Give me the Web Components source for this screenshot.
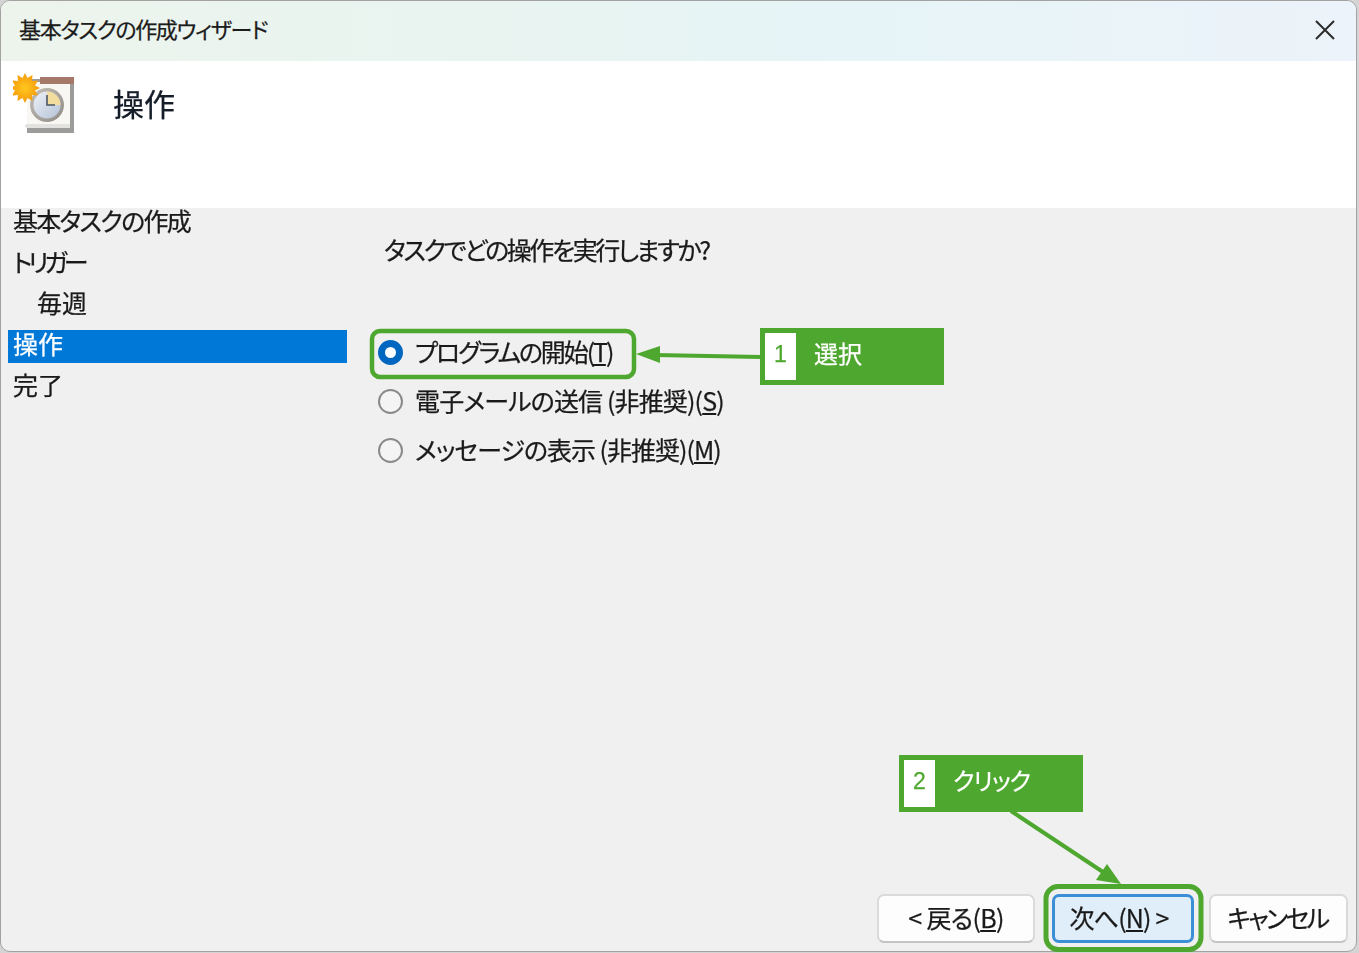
<!DOCTYPE html>
<html lang="ja">
<head>
<meta charset="utf-8">
<title>基本タスクの作成ウィザード</title>
<style>
    html, body { margin: 0; padding: 0; background: #d4d4d4; }
    body {
        width: 1359px;
        height: 953px;
        overflow: hidden;
        font-family: "Noto Sans CJK JP", "Noto Sans", sans-serif;
        color: #111;
        -webkit-text-stroke: .25px;
    }
</style>
</head>
<body>
<wizard-window>
    <title-bar slot="title">基本タスクの作成ウィザード</title-bar>
    <wizard-header slot="header">操作</wizard-header>
    <step-list slot="steps">
        <step-item style="letter-spacing:-1.75px">基本タスクの作成</step-item>
        <step-item style="letter-spacing:-4.2px">トリガー</step-item>
        <step-item indent>毎週</step-item>
        <step-item selected>操作</step-item>
        <step-item>完了</step-item>
    </step-list>
    <action-pane slot="content">
        <span slot="question">タスクでどの操作を実行しますか?</span>
        <radio-option checked style="letter-spacing:-2.1px">プログラムの開始(<u>T</u>)</radio-option>
        <radio-option style="letter-spacing:-.85px">電子メールの送信 (非推奨)(<u>S</u>)</radio-option>
        <radio-option style="letter-spacing:-1px">メッセージの表示 (非推奨)(<u>M</u>)</radio-option>
    </action-pane>
    <wizard-button slot="buttons" style="width:158px;letter-spacing:-.7px">&lt; 戻る(<u>B</u>)</wizard-button>
    <wizard-button slot="buttons" primary style="width:142px;margin-left:17px;padding-right:8px;letter-spacing:-.8px">次へ(<u>N</u>) &gt;</wizard-button>
    <wizard-button slot="buttons" style="width:139px;margin-left:15px;padding-right:2px;letter-spacing:-2.6px">キャンセル</wizard-button>
</wizard-window>

<guide-overlay></guide-overlay>
<guide-tag num="1" style="left:760px;top:328px">選択</guide-tag>
<guide-tag num="2" style="left:899px;top:755px"><span style="letter-spacing:-1.2px">クリック</span></guide-tag>

<script>
class WizardWindow extends HTMLElement {
    constructor() {
        super();
        this.attachShadow({ mode: 'open' });
        this.shadowRoot.innerHTML = `
            <style>
                :host {
                    display: flex;
                    flex-direction: column;
                    box-sizing: border-box;
                    width: 1357px;
                    height: 952px;
                    background: #f0f0f0;
                    border: 1px solid #a2a2a2;
                    border-radius: 10px;
                    overflow: hidden;
                    filter: blur(.45px);
                }
                .main { flex: 1; display: flex; min-height: 0; }
                .footer { display: flex; justify-content: flex-end; padding: 0 8px 8px 0; }
            </style>
            <slot name="title"></slot>
            <slot name="header"></slot>
            <div class="main">
                <slot name="steps"></slot>
                <slot name="content"></slot>
            </div>
            <div class="footer"><slot name="buttons"></slot></div>
        `;
    }
}

class TitleBar extends HTMLElement {
    constructor() {
        super();
        this.attachShadow({ mode: 'open' });
        this.shadowRoot.innerHTML = `
            <style>
                :host {
                    display: flex;
                    align-items: center;
                    height: 60px;
                    flex: none;
                    box-sizing: border-box;
                    padding: 0 21px 2px 18px;
                    background: linear-gradient(90deg, #ecf4ec 0%, #e8f4f2 45%, #e6f4f7 60%, #ecf3fa 100%);
                    font-size: 22px;
                    font-feature-settings: "palt";
                    letter-spacing: -1.3px;
                    color: #1c1c1c;
                }
                .text { flex: 1; padding-bottom: 4px; }
                svg { display: block; }
            </style>
            <span class="text"><slot></slot></span>
            <svg width="20" height="20" viewBox="0 0 20 20" fill="none" stroke="#2b2b2b" stroke-width="2">
                <path d="M1 1 19 19M19 1 1 19"/>
            </svg>
        `;
    }
}

class WizardHeader extends HTMLElement {
    constructor() {
        super();
        this.attachShadow({ mode: 'open' });
        this.shadowRoot.innerHTML = `
            <style>
                :host {
                    display: flex;
                    flex: none;
                    height: 147px;
                    background: #fff;
                    padding: 12px 0 0 12px;
                    box-sizing: border-box;
                    gap: 38px;
                }
                svg { flex: none; display: block; }
                .caption { font-size: 31px; line-height: 44px; margin-top: 8px; margin-left: -1px; color: #141c28; }
            </style>
            <svg width="63" height="62" viewBox="0 0 63 62">
                <defs>
                    <radialGradient id="sun" cx="50%" cy="50%" r="50%">
                        <stop offset="0" stop-color="#ffc81e"/>
                        <stop offset="1" stop-color="#f59a0c"/>
                    </radialGradient>
                    <linearGradient id="face" x1="0" y1="0" x2="1" y2="1">
                        <stop offset="0" stop-color="#eef2f8"/>
                        <stop offset="1" stop-color="#b4c2d6"/>
                    </linearGradient>
                    <linearGradient id="rim" x1="0" y1="0" x2="1" y2="1">
                        <stop offset="0" stop-color="#c4c0b8"/>
                        <stop offset="1" stop-color="#8f8b85"/>
                    </linearGradient>
                </defs>
                <path d="M14 6h47v54H14z" fill="#9c9c9a"/>
                <path d="M14 9h43v46H14z" fill="#f8f7f4"/>
                <path d="M12 52l2-1h43v4H14l-2-1z" fill="#e2e2e0"/>
                <path d="M27 4h34v7H27z" fill="#a5786a"/>
                <circle cx="34" cy="32" r="17" fill="url(#rim)"/>
                <circle cx="34" cy="32" r="13.500" fill="url(#face)"/>
                <path d="M34 18.500a13.500 13.500 0 0 1 13.500 13.500H34z" fill="#f3dd9e"/>
                <path d="M34 22v10h8" fill="none" stroke="#4a5565" stroke-width="1.6"/>
                <path d="M12 0l2.500 5 5-3-.5 6 6-.5-3 5 5 2.500-5 2.500 3 5-6-.5.5 6-5-3-2.500 5-2.500-5-5 3 .5-6-6 .5 3-5-5-2.500 5-2.500-3-5 6 .5-.5-6 5 3z" fill="url(#sun)"/>
            </svg>
            <div class="caption"><slot></slot></div>
        `;
    }
}

class StepList extends HTMLElement {
    constructor() {
        super();
        this.attachShadow({ mode: 'open' });
        this.shadowRoot.innerHTML = `
            <style>
                :host {
                    display: flex;
                    flex-direction: column;
                    flex: none;
                    gap: 8px;
                    width: 339px;
                    margin: -1px 0 0 7px;
                }
            </style>
            <slot></slot>
        `;
    }
}

class StepItem extends HTMLElement {
    constructor() {
        super();
        this.attachShadow({ mode: 'open' });
        this.shadowRoot.innerHTML = `
            <style>
                :host {
                    display: block;
                    height: 33px;
                    line-height: 27px;
                    padding-left: 5px;
                    font-size: 25px;
                    font-feature-settings: "palt";
                    color: #1a1a1a;
                    white-space: nowrap;
                }
                :host([indent]) { padding-left: 29px; }
                :host([selected]) { background: #0078d7; color: #fff; }
            </style>
            <slot></slot>
        `;
    }
}

class ActionPane extends HTMLElement {
    constructor() {
        super();
        this.attachShadow({ mode: 'open' });
        this.shadowRoot.innerHTML = `
            <style>
                :host {
                    display: flex;
                    flex-direction: column;
                    flex: 1;
                    padding: 23px 0 0 31px;
                    font-size: 25px;
                    font-feature-settings: "palt";
                    letter-spacing: -2.4px;
                    color: #1a1a1a;
                }
                .question { line-height: 36px; margin: 0 0 61px 6px; }
            </style>
            <div class="question"><slot name="question"></slot></div>
            <slot></slot>
        `;
    }
}

class RadioOption extends HTMLElement {
    constructor() {
        super();
        this.attachShadow({ mode: 'open' });
        this.shadowRoot.innerHTML = `
            <style>
                :host {
                    display: flex;
                    align-items: center;
                    gap: 12px;
                    height: 49px;
                    white-space: nowrap;
                }
                .dot {
                    box-sizing: border-box;
                    flex: none;
                    width: 25px;
                    height: 25px;
                    border-radius: 50%;
                    border: 2px solid #8a8a8a;
                    background: #f4f4f4;
                }
                :host([checked]) .dot {
                    border: 7px solid #0067c0;
                    background: #fff;
                }
                .text { padding-bottom: 4px; }
            </style>
            <span class="dot"></span>
            <span class="text"><slot></slot></span>
        `;
    }
}

class WizardButton extends HTMLElement {
    constructor() {
        super();
        this.attachShadow({ mode: 'open' });
        this.shadowRoot.innerHTML = `
            <style>
                :host {
                    display: inline-flex;
                    box-sizing: border-box;
                    align-items: center;
                    justify-content: center;
                    height: 49px;
                    padding-bottom: 3px;
                    border: 2px solid #dadada;
                    border-bottom-color: #c4c4c4;
                    border-radius: 7px;
                    background: #fdfdfd;
                    font-size: 25px;
                    font-feature-settings: "palt";
                    color: #1a1a1a;
                    white-space: nowrap;
                }
                :host([primary]) {
                    background: #e0eef9;
                    border: 3px solid #3b8fd6;
                }
            </style>
            <slot></slot>
        `;
    }
}

class GuideTag extends HTMLElement {
    constructor() {
        super();
        this.attachShadow({ mode: 'open' });
        this.shadowRoot.innerHTML = `
            <style>
                :host {
                    position: absolute;
                    display: flex;
                    box-sizing: border-box;
                    width: 184px;
                    height: 57px;
                    padding: 5px;
                    background: #4ea72e;
                    color: #fff;
                    font-size: 24px;
                    font-feature-settings: "palt";
                    align-items: stretch;
                    filter: blur(.35px);
                }
                .num {
                    flex: none;
                    width: 31px;
                    padding-bottom: 4px;
                    box-sizing: border-box;
                    background: #fff;
                    color: #4ea72e;
                    display: flex;
                    align-items: center;
                    justify-content: center;
                    font-family: "Liberation Sans", sans-serif;
                    font-size: 23px;
                }
                .label { padding: 0 0 8px 18px; display: flex; align-items: center; }
            </style>
            <span class="num">${this.getAttribute('num')}</span>
            <span class="label"><slot></slot></span>
        `;
    }
}

class GuideOverlay extends HTMLElement {
    constructor() {
        super();
        this.attachShadow({ mode: 'open' });
        this.shadowRoot.innerHTML = `
            <style>
                :host { position: absolute; inset: 0; width: 1359px; height: 953px; pointer-events: none; }
                svg { display: block; filter: blur(.35px); }
            </style>
            <svg width="1359" height="953" fill="none" stroke="#4ea72e">
                <rect x="372" y="331" width="262" height="46" rx="8" stroke-width="4.500"/>
                <rect x="1046" y="886.500" width="155" height="63" rx="12" stroke-width="5"/>
                <path d="M761 357 655 355" stroke-width="4"/>
                <path d="M636 354 660 346 660 363z" fill="#4ea72e" stroke="none"/>
                <path d="M1011 811 1106 874" stroke-width="4"/>
                <path d="M1121 884 1096 880 1107 864z" fill="#4ea72e" stroke="none"/>
            </svg>
        `;
    }
}

customElements.define('wizard-window', WizardWindow);
customElements.define('title-bar', TitleBar);
customElements.define('wizard-header', WizardHeader);
customElements.define('step-list', StepList);
customElements.define('step-item', StepItem);
customElements.define('action-pane', ActionPane);
customElements.define('radio-option', RadioOption);
customElements.define('wizard-button', WizardButton);
customElements.define('guide-tag', GuideTag);
customElements.define('guide-overlay', GuideOverlay);
</script>
</body>
</html>
